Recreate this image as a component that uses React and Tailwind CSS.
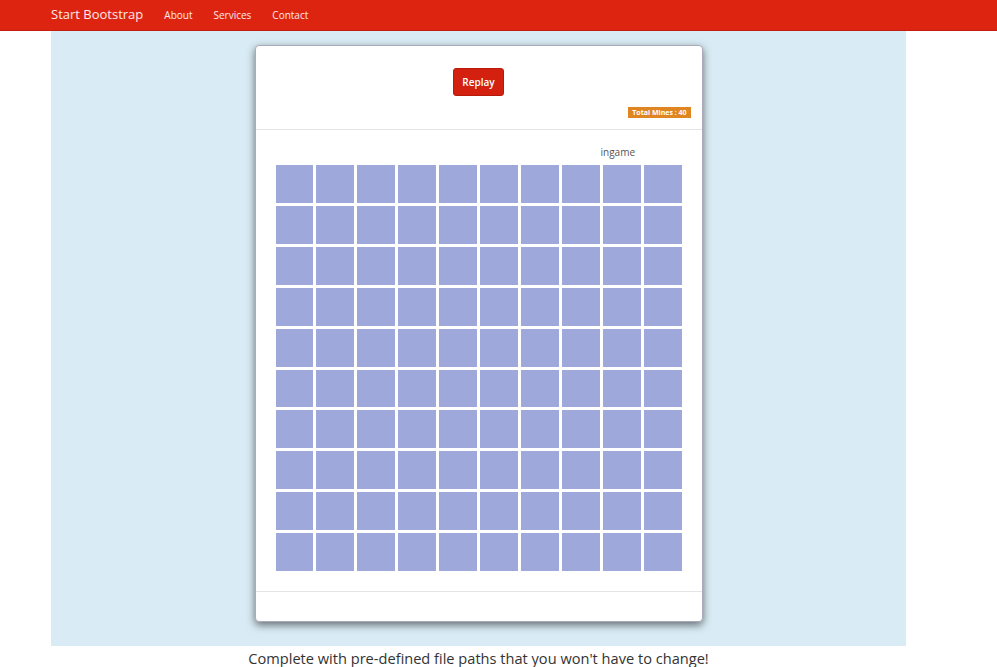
import React from 'react';

const NAV = ['About', 'Services', 'Contact'];
const CELLS = Array.from({ length: 100 }, (_, i) => i);

export default function App() {
  return (
    <div className="min-h-screen bg-white" style={{ fontFamily: '"Open Sans", "Liberation Sans", sans-serif' }}>
      <nav className="h-[31px] bg-[#dd2411] border-b border-[#c11f0f] flex items-center pl-[51px]">
        <span className="text-white/90 text-[13px] mr-[21px]">Start Bootstrap</span>
        {NAV.map(label => (
          <span key={label} className="text-white/90 text-[10px] mr-[21px]">{label}</span>
        ))}
      </nav>

      <div className="ml-[51px] w-[855px] bg-[#d9ecf5] pt-[14px] pb-[24px] flex justify-center">
        <div className="w-[448px] bg-white rounded-[4px] border border-[#aab] shadow-[0_3px_8px_rgba(0,0,0,0.55)]">
          <div className="h-[84px] border-b border-[#e5e5e5] flex flex-col items-center pt-[22px] px-[11px]">
            <button className="w-[51px] h-[28px] bg-[#d3200f] border border-[#b51a0b] rounded-[3px] text-white text-[10px] font-semibold">
              Replay
            </button>
            <div className="self-end mt-[11px] bg-[#df8521] text-white text-[7px] font-bold leading-[11px] px-[4px]">
              Total Mines : 40
            </div>
          </div>

          <div className="px-[20px] pt-[15px] pb-[20px] border-b border-[#e5e5e5]">
            <p className="text-[10px] text-[#555] leading-[14px] pl-[325px] mb-[6px]">ingame</p>
            <div className="w-[406px] h-[406px] grid grid-cols-10 grid-rows-10 gap-[3px]">
              {CELLS.map(i => (
                <div key={i} className="bg-[#9fa8da]" />
              ))}
            </div>
          </div>

          <div className="h-[29px]" />
        </div>
      </div>

      <p className="text-center text-[14.6px] text-[#333] mt-[2px] pr-[40px]">
        Complete with pre-defined file paths that you won't have to change!
      </p>
    </div>
  );
}
